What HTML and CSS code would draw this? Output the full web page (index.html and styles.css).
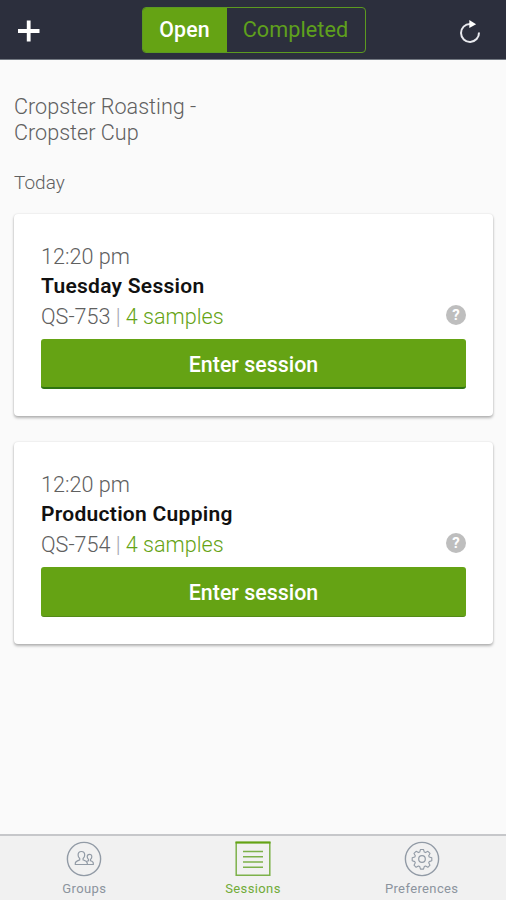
FILE: index.html
```html
<!DOCTYPE html>
<html lang="en">
<head>
<meta charset="utf-8">
<title>Sessions</title>
<link rel="stylesheet" href="styles.css">
</head>
<body>
<header class="topbar">
  <svg class="add" viewBox="0 0 24 24"><path d="M11.700 1.500v21M1 12h21.500" stroke="#fff" stroke-width="3.800"/></svg>
  <div class="segments"><span class="segment active">Open</span><span class="segment">Completed</span></div>
  <svg class="refresh" viewBox="0 0 24 24"><path d="M12 3.900A9 9 0 1 0 21 12.500" fill="none" stroke="#e8e9ee" stroke-width="2"/><path d="M11.300 0v8l6.800-3.700z" fill="#fff"/></svg>
</header>
<main class="content">
  <h1 class="title">Cropster Roasting -<br>Cropster Cup</h1>
  <h2 class="day">Today</h2>
  <article class="card">
    <div class="time">12:20 pm</div>
    <div class="name">Tuesday Session</div>
    <div class="meta"><span>QS-753 <i class="bar">|</i> <span class="samples">4 samples</span></span><span class="help">?</span></div>
    <div class="enter">Enter session</div>
  </article>
  <article class="card">
    <div class="time">12:20 pm</div>
    <div class="name">Production Cupping</div>
    <div class="meta"><span>QS-754 <i class="bar">|</i> <span class="samples">4 samples</span></span><span class="help">?</span></div>
    <div class="enter enter-flat">Enter session</div>
  </article>
</main>
<nav class="tabs">
  <div class="tab">
    <svg class="tab-icon" viewBox="0 0 36 36" fill="none" stroke="#929ba6"><circle cx="18" cy="18" r="16.600" stroke-width="1.400"/><path d="M9.300 23.500v-1.300c0-2 2-2.500 4.400-3.300v-1.400c-1-.9-1.600-2-1.600-3.500 0-2.200 1.300-3.500 3.300-3.500s3.300 1.300 3.300 3.500c0 1.500-.6 2.600-1.600 3.500v1.400c2.400.8 4.200 1.300 4.200 3.300v1.300zM21.300 23.500h6v-1.300c0-1.500-1.200-2-2.800-2.500v-1.300c.9-.8 1.300-1.600 1.300-2.700 0-1.500-.9-2.400-2.300-2.400s-2.300.9-2.300 2.400c0 1.100.5 1.900 1.300 2.700v1.300l-1.800.6" stroke-width="1.200"/></svg>
    <span>Groups</span>
  </div>
  <div class="tab selected">
    <svg class="tab-icon" viewBox="0 0 36 36" fill="none" stroke="#7db14a"><path d="M1.200 1.500h33.600v32.800H1.200z" stroke-width="1.500"/><path d="M.5 1.500h35" stroke="#65a314" stroke-width="1.800"/><path d="M8 10.500h20M8 15.700h20M8 21h20M8 26.200h20" stroke-width="1.500"/></svg>
    <span>Sessions</span>
  </div>
  <div class="tab">
    <svg class="tab-icon" viewBox="0 0 36 36" fill="none" stroke="#929ba6"><circle cx="18" cy="18" r="16.600" stroke-width="1.400"/><circle cx="18" cy="18" r="3.300" stroke-width="1.200"/><path d="M16.500 8.500h3l.8 2.600 1.200.5 2.400-1.300 2.100 2.100-1.300 2.400.5 1.200 2.600.8v3l-2.600.8-.5 1.200 1.300 2.400-2.100 2.100-2.400-1.300-1.200.5-.8 2.600h-3l-.8-2.600-1.200-.5-2.400 1.300-2.100-2.100 1.300-2.400-.5-1.200-2.600-.8v-3l2.600-.8.5-1.200-1.300-2.400 2.100-2.100 2.400 1.300 1.200-.5z" stroke-width="1.100" stroke-linejoin="round"/></svg>
    <span>Preferences</span>
  </div>
</nav>
</body>
</html>
```
FILE: styles.css
```css
* { box-sizing: border-box; }
body {
  margin: 0;
  height: 900px;
  display: flex;
  flex-direction: column;
  overflow: hidden;
  background: #fafafa;
  color: #606060;
  font-family: Roboto, "Liberation Sans", sans-serif;
}
.topbar {
  height: 60px;
  flex: none;
  display: flex;
  align-items: flex-start;
  justify-content: space-between;
  padding: 7px 24px 0 17px;
  background: #2c2f3d;
  border-bottom: 1px solid #737982;
}
.add { width: 24px; height: 24px; margin-top: 12px; }
.refresh { width: 24px; height: 24px; margin-top: 13px; }
.segments {
  display: flex;
  width: 224px;
  height: 46px;
  margin-left: 8px;
  border: 1.500px solid #5c9a20;
  border-radius: 4px;
  overflow: hidden;
}
.segment {
  flex: 1;
  color: #5fa01c;
  font-size: 21.600px;
  line-height: 44px;
  text-align: center;
  letter-spacing: .1px;
}
.segment.active { flex: 0 0 84px; background: #65a314; color: #fff; font-weight: 500; font-size: 21.300px; }
.content { flex: 1; padding: 34px 13px 0 14px; }
.title { margin: 0; font-size: 21.600px; font-weight: 300; line-height: 26px; }
.day { margin: 24px 0 18px; font-size: 19px; font-weight: 300; line-height: 26px; }
.card {
  height: 202px;
  margin-bottom: 26px;
  padding: 28px 27px 0;
  background: #fff;
  border-radius: 4px;
  box-shadow: 0 2px 3px rgba(0, 0, 0, .28), 0 0 2px rgba(0, 0, 0, .12);
}
.time, .meta { font-size: 21.600px; font-weight: 300; line-height: 30px; }
.name { color: #111; font-size: 21px; font-weight: 600; line-height: 28px; letter-spacing: .28px; }
.meta { display: flex; justify-content: space-between; align-items: center; height: 33px; }
.bar { font-style: normal; color: #a5a5ad; }
.samples { color: #65a314; }
.help {
  width: 20px;
  height: 20px;
  margin-bottom: 3px;
  border-radius: 50%;
  background: #bebebe;
  color: #fff;
  font-size: 15px;
  font-weight: 700;
  line-height: 20px;
  text-align: center;
}
.enter {
  height: 50px;
  margin-top: 6px;
  border-bottom: 2px solid #2d7410;
  border-radius: 3px;
  background: #65a314;
  color: #fff;
  font-size: 21.400px;
  font-weight: 500;
  line-height: 51px;
  text-align: center;
}
.enter-flat { border-bottom: 1px solid #548a18; }
.tabs {
  height: 66px;
  flex: none;
  display: flex;
  background: #f1f1f1;
  border-top: 2px solid #c6c7ca;
}
.tab {
  flex: 1;
  display: flex;
  flex-direction: column;
  align-items: center;
  padding-top: 5px;
  color: #8c949e;
  font-size: 13px;
  font-weight: 400;
  line-height: 16px;
  letter-spacing: .38px;
}
.tab-icon { width: 36px; height: 36px; margin-bottom: 4px; }
.selected { color: #70ab37; }
```
